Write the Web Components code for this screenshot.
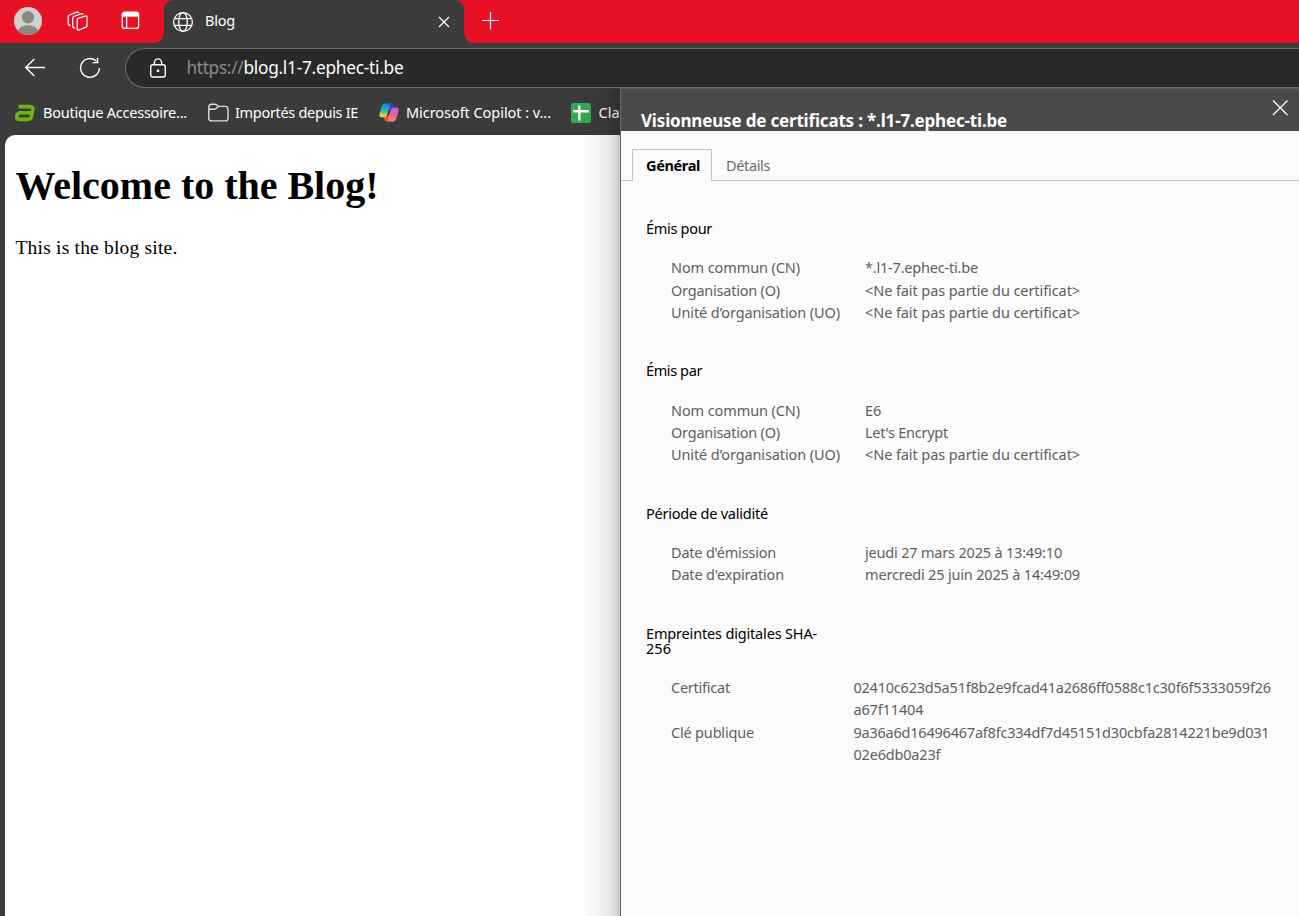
<!DOCTYPE html>
<html lang="fr">
<head>
<meta charset="utf-8">
<title>Blog</title>
<style>
html, body { margin: 0; height: 100%; overflow: hidden; background: #3b3b3b; }
body { font-family: "Noto Sans", "Open Sans", sans-serif; }
</style>
</head>
<body>
<browser-window></browser-window>
<script>
// Text run whose letter-spacing is tuned so that it occupies a given advance width.
class FitText extends HTMLElement {
  constructor() {
    super();
    this.attachShadow({ mode: "open" }).innerHTML =
      `<style>:host{display:block;white-space:nowrap}span{display:inline-block}</style><span><slot></slot></span>`;
  }
  connectedCallback() {
    const target = parseFloat(this.getAttribute("w"));
    if (!target) return;
    const span = this.shadowRoot.querySelector("span");
    const natural = span.getBoundingClientRect().width;
    const count = [...this.textContent].length;
    if (natural) span.style.letterSpacing = ((target - natural) / count).toFixed(4) + "px";
  }
}

class TabStrip extends HTMLElement {
  constructor() {
    super();
    this.attachShadow({ mode: "open" }).innerHTML = `
<style>
:host{display:flex;height:43px;background:#e81123;color:#fff}
svg{display:block;flex:none}
.left{width:164px;display:flex;align-items:center;box-sizing:border-box;padding:0 0 2px 14px}
.left svg:nth-child(2){margin-left:25px;margin-top:2px}
.left svg:nth-child(3){margin-left:33px}
.tab{width:300px;box-sizing:border-box;background:#3b3b3b;border-radius:9px 9px 0 0;position:relative;display:flex;align-items:center;padding-left:8px;padding-right:14px}
.tab::before,.tab::after{content:"";position:absolute;bottom:0;width:10px;height:10px}
.tab::before{left:-10px;background:radial-gradient(circle at 0 0,#e81123 9.5px,#3b3b3b 10.2px)}
.tab::after{right:-10px;background:radial-gradient(circle at 100% 0,#e81123 9.5px,#3b3b3b 10.2px)}
fit-text{margin-left:11px;flex:1;font-size:14.5px;line-height:20px;margin-top:-3px}
.plus{margin:12px 0 0 17px}
</style>
<div class="left">
<svg width="28" height="28" viewBox="0 0 28 28"><defs><clipPath id="c"><circle cx="14" cy="14" r="14"/></clipPath></defs><circle cx="14" cy="14" r="14" fill="#d2d0ce"/><g clip-path="url(#c)" fill="#8a8886"><circle cx="14" cy="10.3" r="6.2"/><ellipse cx="14" cy="24.8" rx="10.5" ry="6.5"/></g></svg>
<svg width="21" height="21" viewBox="0 0 21 21" fill="none" stroke="#fff" stroke-width="1.3" stroke-linejoin="round" stroke-linecap="round"><path d="M11.2 7.4L18.3 5Q20 4.5 20 6.1V14.4Q20 15.6 18.8 16.1L12 19Q10.2 19.6 10.2 17.8V8.9Q10.2 7.8 11.2 7.4Z"/><path d="M7.5 17Q5.7 17 5.7 15.2V7.2Q5.7 6 6.9 5.5L14.2 2.7Q15.6 2.3 16 3.3"/><path d="M3 14.5Q1.2 14.2 1.2 12.6V5.7Q1.2 4.5 2.3 4L9.7 1.2Q10.9.8 11.6 1.4"/></svg>
<svg width="19" height="19" viewBox="0 0 19 19" fill="none" stroke="#fff" stroke-width="1.3"><rect x="1.2" y="1.2" width="16.4" height="16.2" rx="2.5"/><path d="M1 4Q1 1 4 1H15Q18 1 18 4V5.8H1Z" fill="#fff" stroke="none"/><path d="M5.6 6V17.4"/></svg>
</div>
<div class="tab">
<svg width="22" height="22" viewBox="0 0 22 22" fill="none" stroke="#fff" stroke-width="1.3"><circle cx="11" cy="11" r="9.4"/><ellipse cx="11" cy="11" rx="4.3" ry="9.4"/><path d="M2.6 7.6H19.4M2.6 14.4H19.4"/></svg>
<fit-text w="30">Blog</fit-text>
<svg width="12" height="12" viewBox="0 0 12 12" stroke="#fff" stroke-width="1.3"><path d="M1 1L11 11M11 1L1 11"/></svg>
</div>
<svg class="plus" width="19" height="18" viewBox="0 0 19 18" stroke="#fff" stroke-width="1.2"><path d="M1 8.5H18M9.5 0V17.5"/></svg>`;
  }
}

class AddressBar extends HTMLElement {
  constructor() {
    super();
    this.attachShadow({ mode: "open" }).innerHTML = `
<style>
:host{display:flex;height:50px;align-items:center;background:#3b3b3b;box-sizing:border-box;padding-left:24px}
svg{display:block;flex:none}
.re{margin-left:33px}
.box{display:flex;align-items:center;box-sizing:border-box;flex:1;height:40px;margin-left:24px;background:#292929;border:1px solid #6b6b6b;border-right:0;border-radius:20px 0 0 20px;padding-left:23px;font-size:17.3px;line-height:24px;color:#fff}
.proto{margin-left:19.4px;color:#8b8b8b}
fit-text{margin-top:-1px}
</style>
<svg width="22" height="20" viewBox="0 0 22 20" fill="none" stroke="#fff" stroke-width="1.4"><path d="M10.3 1L1.7 9.5L10.3 18M1.7 9.5H21"/></svg>
<svg class="re" width="22" height="22" viewBox="0 0 22 22" fill="none" stroke="#fff" stroke-width="1.4"><path d="M17.6 4.2A9.4 9.4 0 1 0 20.4 11M18.6 .8V5.6H13.6"/></svg>
<div class="box">
<svg width="18" height="20" viewBox="0 0 18 20" fill="none" stroke="#fff" stroke-width="1.4"><rect x="1.7" y="6.7" width="14.6" height="12.3" rx="2"/><path d="M5.4 6.5V4.5A3.6 3.6 0 0 1 12.6 4.5V6.5"/><circle cx="9" cy="12.8" r="1.4" fill="#fff" stroke="none"/></svg>
<fit-text class="proto" w="57">https://</fit-text><fit-text w="160">blog.l1-7.ephec-ti.be</fit-text>
</div>`;
  }
}

class BookmarkBar extends HTMLElement {
  constructor() {
    super();
    this.attachShadow({ mode: "open" }).innerHTML = `
<style>
:host{display:flex;height:42px;align-items:center;background:#3b3b3b;color:#fff;font-size:14.5px;line-height:20px;box-sizing:border-box;padding:0 0 3px 14px}
svg{display:block;flex:none;margin-right:8px}
fit-text{margin-top:-1px;margin-right:21px}
</style>
<svg width="21" height="18" viewBox="0 0 21 18" fill="none" stroke="#6fb512" stroke-width="3.6" stroke-linejoin="round"><path d="M4.6 2.6H15.8Q19.4 2.6 18.8 5.4L17.4 12.6Q17 15.4 14 15.4H5.2Q2.2 15.4 2.8 12.4Q3.4 8.8 7 8.8H17.6"/></svg>
<fit-text w="144">Boutique Accessoire...</fit-text>
<svg style="margin-right:6px" width="21" height="19" viewBox="0 0 21 19" fill="none" stroke="#dedede" stroke-width="1.4"><path d="M.8 4Q.8 1.2 3.6 1.2H7Q8.4 1.2 9.3 2.6L10.3 3.4H17.3Q20 3.4 20 6.2V15.2Q20 17.9 17.3 17.9H3.6Q.8 17.9.8 15.2ZM.8 6.2H6.6Q7.8 6.2 8.5 5.2L10.3 3.4"/></svg>
<fit-text w="123">Importés depuis IE</fit-text>
<svg style="margin-right:7px" width="20" height="19" viewBox="0 0 20 19"><defs>
<linearGradient id="a" x1=".3" y1="0" x2=".1" y2="1"><stop offset="0" stop-color="#1683df"/><stop offset=".5" stop-color="#27bfae"/><stop offset=".8" stop-color="#c2d53e"/><stop offset="1" stop-color="#f9bf25"/></linearGradient>
<linearGradient id="b" x1=".8" y1="0" x2=".3" y2="1"><stop offset="0" stop-color="#b45cf0"/><stop offset=".5" stop-color="#ed6298"/><stop offset="1" stop-color="#ff9257"/></linearGradient></defs>
<path d="M5.6.5H12Q14 .5 14.6 2.6L15.3 5H12.5Q10.3 5 9.6 7.2L8 12.4Q7.2 14.4 5 14.4H2.6Q-.2 14.4.4 11.3L2.6 3.4Q3.4.5 5.6.5Z" fill="url(#a)"/>
<path d="M10.2.5H12.2Q14 .5 14.6 2.6L15.3 5H12.5Q11.7 5 11.2 5.4Z" fill="#174cc7"/>
<path d="M14.4 18.4H8Q6 18.4 5.4 16.3L4.8 14.1H7.3Q9.5 14 10.2 11.8L11.9 6.4Q12.5 4.6 14.7 4.6H17.4Q20.2 4.6 19.7 7.6L17.5 15.5Q16.6 18.4 14.4 18.4Z" fill="url(#b)"/>
<path d="M4.8 14.1H7.3Q8.2 14 8.8 13.4L10 18.4H8Q6 18.4 5.4 16.3Z" fill="#ee5145"/></svg>
<fit-text style="margin-right:20px" w="145">Microsoft Copilot : v...</fit-text>
<svg style="margin-right:7.5px" width="20" height="20" viewBox="0 0 20 20"><rect width="20" height="20" rx="2" fill="#34a853"/><path d="M2.3 8.2H17.8M8.3 2.5V17.5" stroke="#fff" stroke-width="2.4" fill="none"/></svg>
<fit-text>Cla</fit-text>`;
  }
}

class WebPage extends HTMLElement {
  constructor() {
    super();
    this.attachShadow({ mode: "open" }).innerHTML = `
<style>
:host{display:block;flex:1;margin-left:5px;background:#fff;border-radius:10px 0 0 0;box-sizing:border-box;padding:28px 10px 0 10.5px;font-family:"Liberation Serif",serif;color:#000}
h1{margin:0;font-size:40px;line-height:46px;font-weight:700}
p{margin:27px 0 0;font-size:19.5px;line-height:24px}
</style>
<h1><fit-text w="363">Welcome to the Blog!</fit-text></h1>
<p><fit-text w="162">This is the blog site.</fit-text></p>`;
  }
}

class CertSection extends HTMLElement {
  constructor() {
    super();
    this.attachShadow({ mode: "open" }).innerHTML = `
<style>
:host{display:block;margin-bottom:40.1px}
.head{font-size:14.5px;line-height:15px;color:#000;margin-bottom:20.1px}
.rows{padding-left:25px}
</style>
<div class="head"><slot name="head"></slot></div><div class="rows"><slot></slot></div>`;
  }
}

class CertRow extends HTMLElement {
  constructor() {
    super();
    this.attachShadow({ mode: "open" }).innerHTML = `
<style>
:host{display:grid;grid-template-columns:var(--label,194px) 1fr;font-size:14.5px;line-height:22.4px;color:#5f5f5f}
</style>
<slot name="label"></slot><div><slot></slot></div>`;
  }
}

class CertDialog extends HTMLElement {
  constructor() {
    super();
    const row = (l, lw, ...vals) => `<cert-row><fit-text slot="label" w="${lw - 1}">${l}</fit-text>` +
      vals.map(([t, w]) => `<fit-text w="${w - 1}">${t}</fit-text>`).join("") + `</cert-row>`;
    const none = ["&lt;Ne fait pas partie du certificat&gt;", 216];
    this.attachShadow({ mode: "open" }).innerHTML = `
<style>
:host{display:flex;flex-direction:column;box-sizing:border-box;border-left:1px solid #686868;border-top:1px solid #5c5c5c;background:#fbfbfb}
header{height:42px;flex:none;overflow:hidden;background:#4a4a4a;color:#fff;display:flex;justify-content:space-between;align-items:flex-start;box-sizing:border-box;padding:20px 11px 0 20px;font-size:17px;line-height:24px;font-weight:700}
header svg{margin-top:-9px}
nav{display:flex;height:50px;flex:none;box-sizing:border-box;padding:18px 0 0 11px;font-size:14.5px;line-height:20px;background:linear-gradient(#c4c4c4,#c4c4c4) 0 49px/100% 1px no-repeat}
.on{box-sizing:border-box;width:80px;border:1px solid #c4c4c4;border-bottom:0;background:#fbfbfb;font-weight:700;padding:5px 0 0 13px;color:#000}
.off{padding:6px 0 0 14px;color:#6b6b6b}
main{padding:40px 0 0 25px}
.hash{--label:182.4px}
</style>
<header><fit-text w="366">Visionneuse de certificats : *.l1-7.ephec-ti.be</fit-text><svg width="16" height="16" viewBox="0 0 16 16" stroke="#fff" stroke-width="1.3"><path d="M1 .5L15.5 15M15.5 .5L1 15"/></svg></header>
<nav><div class="on"><fit-text w="54">Général</fit-text></div><div class="off"><fit-text w="44">Détails</fit-text></div></nav>
<main>
<cert-section><fit-text slot="head" w="66">Émis pour</fit-text>
${row("Nom commun (CN)", 130, ["*.l1-7.ephec-ti.be", 114])}${row("Organisation (O)", 110, none)}${row("Unité d’organisation (UO)", 170, none)}</cert-section>
<cert-section><fit-text slot="head" w="56">Émis par</fit-text>
${row("Nom commun (CN)", 130, ["E6", 17])}${row("Organisation (O)", 110, ["Let's Encrypt", 84])}${row("Unité d’organisation (UO)", 170, none)}</cert-section>
<cert-section><fit-text slot="head" w="122">Période de validité</fit-text>
${row("Date d'émission", 106, ["jeudi 27 mars 2025 à 13:49:10", 198])}${row("Date d'expiration", 114, ["mercredi 25 juin 2025 à 14:49:09", 216])}</cert-section>
<cert-section class="hash"><fit-text slot="head" w="171">Empreintes digitales SHA-</fit-text><fit-text slot="head" w="25">256</fit-text>
${row("Certificat", 60, ["02410c623d5a51f8b2e9fcad41a2686ff0588c1c30f6f5333059f26", 418.5], ["a67f11404", 71])}${row("Clé publique", 84, ["9a36a6d16496467af8fc334df7d45151d30cbfa2814221be9d031", 417], ["02e6db0a23f", 88])}</cert-section>
</main>`;
  }
}

class BrowserWindow extends HTMLElement {
  constructor() {
    super();
    this.attachShadow({ mode: "open" }).innerHTML = `
<style>
:host{display:flex;flex-direction:column;position:relative;width:1299px;height:916px;overflow:hidden;background:#3b3b3b}
.shade{position:absolute;left:580px;top:89px;width:40px;bottom:0;background:linear-gradient(90deg,rgba(0,0,0,0),rgba(0,0,0,.02) 25%,rgba(0,0,0,.08) 70%,rgba(0,0,0,.14) 87%,rgba(0,0,0,.23))}
cert-dialog{position:absolute;left:620px;top:88px;right:0;bottom:0}
</style>
<tab-strip></tab-strip><address-bar></address-bar><bookmark-bar></bookmark-bar><web-page></web-page>
<div class="shade"></div><cert-dialog></cert-dialog>`;
  }
}

customElements.define("fit-text", FitText);
customElements.define("tab-strip", TabStrip);
customElements.define("address-bar", AddressBar);
customElements.define("bookmark-bar", BookmarkBar);
customElements.define("web-page", WebPage);
customElements.define("cert-section", CertSection);
customElements.define("cert-row", CertRow);
customElements.define("cert-dialog", CertDialog);
customElements.define("browser-window", BrowserWindow);
</script>
</body>
</html>
